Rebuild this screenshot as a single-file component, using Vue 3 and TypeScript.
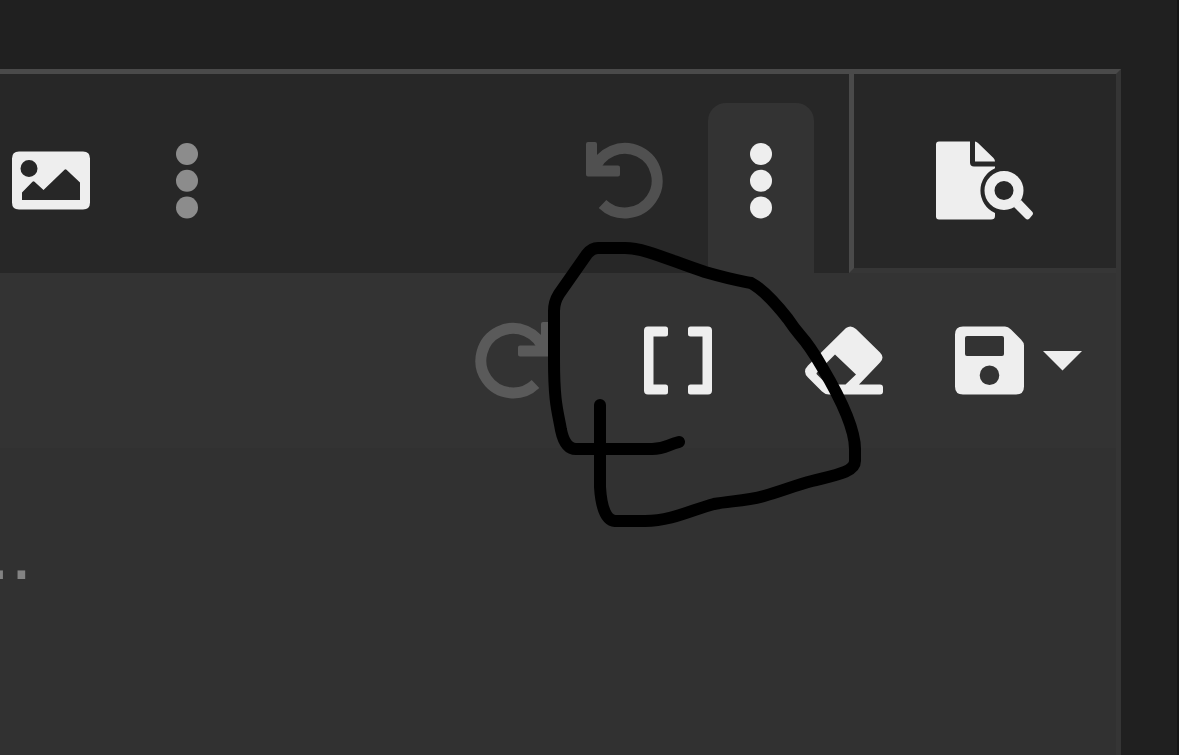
<script setup lang="ts">
import { ref } from 'vue'

const message = ref('')
const expanded = ref(true)
</script>

<template>
  <main class="page">
    <section class="editor" aria-label="Message editor">
      <div class="toolbar">
        <div class="tools">
          <button class="tool" type="button" aria-label="Insert image">
            <svg width="78" height="60" viewBox="0 0 78 60" fill="currentColor" fill-rule="evenodd">
              <path d="M7 0.500H71Q78 0.500 78 7.500V51.500Q78 58.500 71 58.500H7Q0 58.500 0 51.500V7.500Q0 0.500 7 0.500ZM17 9a8.500 8.500 0 1 0 0 17a8.500 8.500 0 1 0 0-17ZM10 49H68V31.500L54.500 18.700Q53.500 17.700 52.500 18.700L31.500 39L22.500 30.700Q21.500 29.700 20.500 30.700L10 41.500Z" />
            </svg>
          </button>
          <button class="tool muted" type="button" aria-label="More rich text">
            <svg width="22" height="76" viewBox="0 0 22 76" fill="currentColor">
              <circle cx="11" cy="11" r="11" /><circle cx="11" cy="37.700" r="11" /><circle cx="11" cy="64.500" r="11" />
            </svg>
          </button>
          <span class="spacer"></span>
          <button class="tool undo" type="button" aria-label="Undo" disabled>
            <svg width="78" height="78" viewBox="0 0 78 78">
              <path d="M8 29A32.300 32.300 0 1 1 16.500 62" fill="none" stroke="currentColor" stroke-width="11" />
              <path d="M2 0H9Q11 0 11 2V23.500H32Q34 23.500 34 25.500V32.500Q34 34.500 32 34.500H2Q0 34.500 0 32.500V2Q0 0 2 0Z" fill="currentColor" />
            </svg>
          </button>
          <button class="tool" :class="{ open: expanded }" type="button" aria-label="More misc" :aria-expanded="expanded" @click="expanded = !expanded">
            <svg width="22" height="76" viewBox="0 0 22 76" fill="currentColor">
              <circle cx="11" cy="11" r="11" /><circle cx="11" cy="37.700" r="11" /><circle cx="11" cy="64.500" r="11" />
            </svg>
          </button>
        </div>
        <button class="preview" type="button" aria-label="Preview">
          <svg width="98" height="80" viewBox="0 0 98 80" fill="currentColor">
            <path d="M3 0.500H34V21.500Q34 25.500 38 25.500H59V27.200A24.500 24.500 0 0 0 59 72V75Q59 78.500 55 78.500H3Q0 78.500 0 75.500V3.500Q0 0.500 3 0.500Z" />
            <path d="M39 0.500Q40.500 0.500 42 2L57.500 17Q59 18.500 59 20.500H39Z" />
            <circle cx="68" cy="49.500" r="14.500" fill="none" stroke="currentColor" stroke-width="10" />
            <path d="M85 59L96 70.500Q98 72.500 96 74.500L93.500 77.500Q91.500 79.500 89.500 77.500L78 66Z" />
          </svg>
        </button>
      </div>

      <div v-if="expanded" class="more">
        <button class="tool redo" type="button" aria-label="Redo" disabled>
          <svg width="78" height="78" viewBox="0 0 78 78">
            <g transform="translate(78 0) scale(-1 1)">
              <path d="M8 29A32.300 32.300 0 1 1 16.500 62" fill="none" stroke="currentColor" stroke-width="11" />
              <path d="M2 0H9Q11 0 11 2V23.500H32Q34 23.500 34 25.500V32.500Q34 34.500 32 34.500H2Q0 34.500 0 32.500V2Q0 0 2 0Z" fill="currentColor" />
            </g>
          </svg>
        </button>
        <button class="tool" type="button" aria-label="Toggle BB code">
          <svg width="70" height="70" viewBox="0 0 70 70" fill="currentColor">
            <path id="bracket" d="M5 0.500H22.500Q25 0.500 25 3V8Q25 10.500 22.500 10.500H10.500V58.500H22.500Q25 58.500 25 61V66Q25 68.500 22.500 68.500H5Q1 68.500 1 64.500V4.500Q1 0.500 5 0.500Z" />
            <use href="#bracket" transform="translate(70 0) scale(-1 1)" />
          </svg>
        </button>
        <button class="tool" type="button" aria-label="Remove formatting">
          <svg width="80" height="70" viewBox="-1 0 80 70" fill="currentColor" fill-rule="evenodd">
            <path transform="translate(1 -0.500)" d="M41 2.500Q46 -1 51 3.500L75 27Q80 32 75 37L54 59H75Q78 59 78 62V66Q78 69 75 69H24Q20 69 17 66L3 52Q-3 46 3 40ZM30 29L12 47Q11 48 12 49L21 58Q22 59 24 59H40.500L51 49Z" />
          </svg>
        </button>
        <button class="save" type="button" aria-label="Drafts">
          <svg width="69" height="70" viewBox="0 0 69 70" fill="currentColor" fill-rule="evenodd">
            <path d="M8 0.500H50Q53 0.500 56 3.500L66 13.500Q69 16.500 69 19.500V60.500Q69 68.500 61 68.500H8Q0 68.500 0 60.500V8.500Q0 0.500 8 0.500ZM12 10Q10 10 10 12V28Q10 30 12 30H47Q49 30 49 28V12Q49 10 47 10ZM34.500 39.500a9.800 9.800 0 1 0 0 19.600a9.800 9.800 0 1 0 0-19.600Z" />
          </svg>
          <svg width="39" height="20" viewBox="0 0 39 20" fill="currentColor"><path d="M0 0H39L19.500 19.500Z" /></svg>
        </button>
      </div>

      <textarea v-model="message" class="message" aria-label="Message" placeholder=".."></textarea>

      <svg class="drawing" width="316" height="290" viewBox="546 240 316 290" aria-hidden="true">
        <path d="M600 405V487Q602 520 615 521H645C672 521 694 509 714 504C730 501 746 501 764 496C782 491 796 485 812 481C836 475 855 472 855 461V449C855 427 838 394 822 367C814 353 808 344 800 335Q794 328 788 319Q766 291 751 283C741 281 733 280 705 272C671 261 645 248 625 248H598Q592 248 587 254L559 294Q554 302 554 311V360C554 404 558 412 561 430Q565 449 576 449H652C665 449 667 445 679 442" />
      </svg>
    </section>
  </main>
</template>

<style>
body {
  margin: 0;
  background: #202020;
}
</style>

<style scoped>
.page {
  box-sizing: border-box;
  min-height: 100vh;
  display: flex;
  padding: 69px 56px 0 0;
  border-right: 2px solid #151515;
  background: #202020;
  overflow: hidden;
  font-family: "Liberation Sans", Arial, sans-serif;
}

.editor {
  position: relative;
  flex: 1;
  min-width: 0;
  display: flex;
  flex-direction: column;
  border-top: 5px solid #4a4a4a;
  border-right: 5px solid #353535;
  background: #313131;
}

button {
  box-sizing: border-box;
  margin: 0;
  padding: 0;
  border: 0;
  background: transparent;
  color: #eee;
  display: flex;
  align-items: center;
  justify-content: center;
  flex-shrink: 0;
}

svg {
  display: block;
  flex-shrink: 0;
}

.toolbar {
  display: flex;
  height: 199px;
  background: #272727;
}

.tools {
  flex: 1;
  display: flex;
  align-items: flex-end;
  gap: 30px;
  margin-left: -2px;
  padding-right: 35px;
}

.tool {
  width: 106px;
}

.tools .tool {
  height: 170px;
  padding-bottom: 14px;
  border-radius: 18px 18px 0 0;
}

.spacer {
  flex: 1;
}

.tool.muted {
  color: #8c8c8c;
}

.tool.undo {
  color: #505050;
}

.tool.redo {
  color: #5a5a5a;
}

.tool.open {
  background: #333;
}

.preview {
  width: 267px;
  padding-top: 20px;
  border-left: 5px solid #4a4a4a;
  border-bottom: 5px solid #363636;
}

.more {
  display: flex;
  align-items: center;
  justify-content: flex-end;
  gap: 59px;
  height: 175px;
  padding-right: 34px;
  background: #333;
}

.save {
  gap: 19px;
}

.message {
  flex: 1;
  box-sizing: border-box;
  width: 100%;
  padding: 56px 0 0;
  border: 0;
  outline: 0;
  resize: none;
  background: #313131;
  color: #eee;
  font-family: inherit;
  font-size: 80px;
  line-height: 96px;
  text-indent: -12px;
}

.message::placeholder {
  color: #838383;
  opacity: 1;
}

.drawing {
  position: absolute;
  top: 166px;
  right: 254px;
  pointer-events: none;
  fill: none;
  stroke: #000;
  stroke-width: 12px;
  stroke-linecap: round;
  stroke-linejoin: round;
}
</style>
